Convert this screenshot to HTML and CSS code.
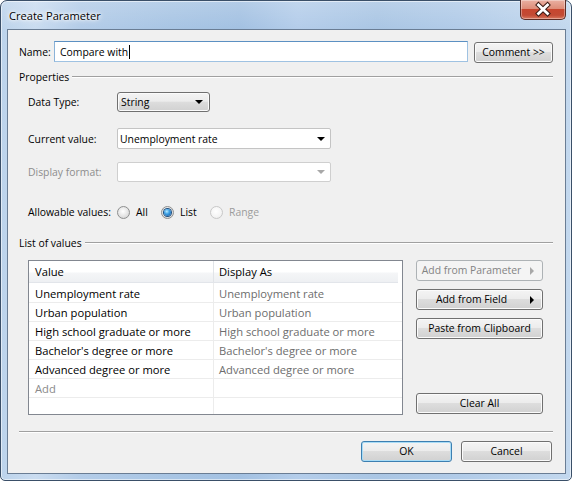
FILE: index.html
```html
<!DOCTYPE html>
<html>
<head>
<meta charset="utf-8">
<link rel="stylesheet" href="styles.css">
</head>
<body>
<div class="window">
  <div class="titlebar">
    <span class="title">Create Parameter</span>
    <div class="close">
      <svg width="44" height="19" viewBox="0 0 44 19">
        <path d="M17.5 5 L26.5 13.5 M26.5 5 L17.5 13.5" stroke="#3a1a14" stroke-width="4.8" stroke-linecap="square" fill="none"/>
        <path d="M17.5 5 L26.5 13.5 M26.5 5 L17.5 13.5" stroke="#ffffff" stroke-width="2.8" stroke-linecap="square" fill="none"/>
      </svg>
    </div>
  </div>
  <div class="client">
    <div class="name-row">
      <span class="name-label">Name:</span>
      <div class="textbox"><span>Compare with</span><span class="caret"></span></div>
      <button class="btn comment">Comment &gt;&gt;</button>
    </div>

    <div class="group-head props"><span class="gtitle">Properties</span><span class="rule"></span></div>

    <div class="field-row datatype">
      <span class="flabel">Data Type:</span>
      <div class="dropdown"><span>String</span><span class="arrow"></span></div>
    </div>

    <div class="field-row current">
      <span class="flabel">Current value:</span>
      <div class="combo"><span>Unemployment rate</span><span class="arrow"></span></div>
    </div>

    <div class="field-row display">
      <span class="flabel disabled">Display format:</span>
      <div class="combo combo-disabled"><span></span><span class="arrow"></span></div>
    </div>

    <div class="field-row allow">
      <span class="flabel">Allowable values:</span>
      <span class="ropt opt-all"><span class="radio"></span><span class="rlabel">All</span></span>
      <span class="ropt opt-list"><span class="radio checked"></span><span class="rlabel">List</span></span>
      <span class="ropt"><span class="radio rdisabled"></span><span class="rlabel disabled2">Range</span></span>
    </div>

    <div class="group-head list-head"><span class="gtitle">List of values</span><span class="rule"></span></div>

    <div class="list-area">
      <div class="table">
        <div class="thead">
          <div class="c1">Value</div>
          <div class="c2">Display As</div>
        </div>
        <div class="trow first"><div class="c1">Unemployment rate</div><div class="c2">Unemployment rate</div></div>
        <div class="trow"><div class="c1">Urban population</div><div class="c2">Urban population</div></div>
        <div class="trow"><div class="c1">High school graduate or more</div><div class="c2">High school graduate or more</div></div>
        <div class="trow"><div class="c1">Bachelor's degree or more</div><div class="c2">Bachelor's degree or more</div></div>
        <div class="trow"><div class="c1">Advanced degree or more</div><div class="c2">Advanced degree or more</div></div>
        <div class="trow"><div class="c1 add">Add</div><div class="c2"></div></div>
        <div class="trow"><div class="c1"></div><div class="c2"></div></div>
      </div>
      <div class="side">
        <button class="btn side-btn with-arrow btn-disabled">Add from Parameter<span class="tri"></span></button>
        <button class="btn side-btn with-arrow">Add from Field<span class="tri"></span></button>
        <button class="btn side-btn">Paste from Clipboard</button>
        <button class="btn side-btn clear">Clear All</button>
      </div>
    </div>

    <div class="sep"></div>

    <div class="footer">
      <button class="btn foot ok">OK</button>
      <button class="btn foot">Cancel</button>
    </div>
  </div>
</div>
</body>
</html>
```

FILE: styles.css
```css
html, body {
  margin: 0;
  padding: 0;
  background: #ffffff;
}

body {
  width: 572px;
  height: 481px;
  overflow: hidden;
  font-family: "Open Sans", "Noto Sans", "Liberation Sans", sans-serif;
  font-size: 10.4px;
  color: #000;
}

.window {
  box-sizing: border-box;
  width: 572px;
  height: 481px;
  border: 1px solid #3a4f68;
  border-radius: 7px 7px 5px 5px;
  background:
    linear-gradient(to bottom, rgba(255,255,255,0.18) 0px, rgba(255,255,255,0) 28px),
    linear-gradient(to right, #bcd3eb 0%, #cadcf0 6%, #b3cce8 14%, #a8c5e4 30%, #a3c1e2 42%, #b4cdea 52%, #aac6e4 66%, #b1cbe8 80%, #c3d8ee 100%);
  padding: 0 5px 6px 6px;
  display: flex;
  flex-direction: column;
  box-shadow: inset 0 0 0 1px rgba(255,255,255,0.55);
}

.titlebar {
  position: relative;
  height: 28px;
  flex: none;
}

.title {
  position: relative;
  left: 2px;
  line-height: 29px;
  font-size: 11.1px;
  color: #000;
  text-shadow: 0 0 6px #fff, 0 0 4px #fff, 0 0 2px #fff;
}

.close {
  position: absolute;
  right: 0px;
  top: -1px;
  width: 44px;
  height: 19px;
  border: 1px solid #5b2c25;
  border-top: none;
  border-radius: 0 0 5px 5px;
  background: linear-gradient(to bottom, #eab0a2 0%, #de8d79 45%, #c7462f 50%, #c24a34 80%, #d9785f 100%);
  box-shadow: inset 0 0 0 1px rgba(255,255,255,0.35);
}

.close svg {
  display: block;
}

.client {
  flex: 1;
  background: #f0f0f0;
  border: 1px solid #6a7d94;
  padding: 0 12px 0 11px;
  display: flex;
  flex-direction: column;
}

/* Name row */
.name-row {
  margin-top: 11px;
  height: 21px;
  display: flex;
  align-items: center;
}

.name-label {
  width: 35px;
  flex: none;
}

.textbox {
  box-sizing: border-box;
  width: 414px;
  height: 21px;
  background: #fff;
  border: 1px solid #9fc2e2;
  border-top-color: #5c90c2;
  border-left-color: #8ab2d8;
  display: flex;
  align-items: center;
  padding-left: 5px;
}

.caret {
  display: inline-block;
  width: 1px;
  height: 14px;
  background: #000;
  margin-left: 1px;
}

.btn {
  box-sizing: border-box;
  font-family: inherit;
  font-size: 10.4px;
  color: #000;
  height: 21px;
  padding: 0;
  border: 1px solid #707070;
  border-radius: 3px;
  background: linear-gradient(to bottom, #f4f4f4 0%, #ececec 46%, #dddddd 50%, #d1d1d1 100%);
  box-shadow: inset 0 0 0 1px #fbfbfb;
  line-height: 19px;
  text-align: center;
  position: relative;
}

.comment {
  width: 79px;
  margin-left: 6px;
  margin-top: 1px;
}

/* Group headers */
.group-head {
  height: 14px;
  display: flex;
  align-items: center;
}

.group-head .gtitle {
  flex: none;
  padding-right: 3px;
}

.group-head .rule {
  flex: 1;
  height: 0;
  border-top: 1px solid #a0a0a0;
  border-bottom: 1px solid #ffffff;
}

.props {
  margin-top: 8px;
}

.list-head {
  margin-top: 16px;
}

/* Field rows */
.field-row {
  display: flex;
  align-items: center;
  padding-left: 9px;
}

.flabel {
  width: 89px;
  flex: none;
}

.disabled {
  color: #8d8d8d;
}

.datatype {
  margin-top: 8px;
  height: 20px;
}

.current {
  margin-top: 16px;
  height: 21px;
}

.display {
  margin-top: 13px;
  height: 20px;
}

.allow {
  margin-top: 22px;
  height: 16px;
}

.dropdown {
  box-sizing: border-box;
  width: 93px;
  height: 20px;
  border: 1px solid #707070;
  border-radius: 3px;
  background: linear-gradient(to bottom, #f4f4f4 0%, #ececec 46%, #dddddd 50%, #d1d1d1 100%);
  box-shadow: inset 0 0 0 1px #fbfbfb;
  display: flex;
  align-items: center;
  justify-content: space-between;
  padding: 0 6px 0 3px;
}

.arrow {
  width: 0;
  height: 0;
  border-left: 4px solid transparent;
  border-right: 4px solid transparent;
  border-top: 4px solid #000;
}

.combo {
  box-sizing: border-box;
  width: 214px;
  height: 21px;
  background: #fff;
  border: 1px solid #c4c4c4;
  border-radius: 2px;
  display: flex;
  align-items: center;
  justify-content: space-between;
  padding: 0 5px 0 2px;
}

.combo-disabled {
  height: 20px;
  border-color: #cfcfcf;
}

.combo-disabled .arrow {
  border-top-color: #a8a8a8;
}

.ropt {
  display: flex;
  align-items: center;
  flex: none;
}

.opt-all {
  width: 44px;
}

.opt-list {
  width: 49px;
}

.radio {
  box-sizing: border-box;
  width: 13px;
  height: 13px;
  border-radius: 50%;
  border: 1px solid #8e8f8f;
  background: radial-gradient(circle at 45% 40%, #ffffff 0%, #e9e9e9 45%, #cdcdcd 100%);
  flex: none;
  display: flex;
  align-items: center;
  justify-content: center;
}

.radio.checked::after {
  content: "";
  width: 7px;
  height: 7px;
  border-radius: 50%;
  background: radial-gradient(circle at 40% 35%, #b9ecff 0%, #3fa2e6 40%, #0c4f9b 100%);
  box-shadow: 0 0 0 1px #1f4e7e;
}

.radio.rdisabled {
  border-color: #c8c8c8;
  background: radial-gradient(circle at 45% 40%, #ffffff 0%, #f4f4f4 60%, #e6e6e6 100%);
}

.rlabel {
  margin-left: 6px;
}

.disabled2 {
  color: #9c9c9c;
}

/* List area */
.list-area {
  margin-top: 10px;
  display: flex;
  align-items: flex-start;
  padding-left: 9px;
}

.table {
  box-sizing: border-box;
  width: 375px;
  height: 155px;
  border: 1px solid #828790;
  background: #fff;
  overflow: hidden;
  flex: none;
  font-size: 11.2px;
}

.thead {
  display: flex;
  height: 21px;
  border-bottom: 1px solid #e2e5ea;
  background: linear-gradient(to bottom, #ffffff 0%, #ffffff 50%, #f4f5f7 60%, #eef0f3 100%);
  margin-right: 4px;
}

.thead .c1, .thead .c2 {
  line-height: 21px;
  color: #000;
}

.thead .c1 {
  border-right: 1px solid #e1e4e8;
}

.c1 {
  box-sizing: border-box;
  width: 185px;
  padding-left: 6px;
  flex: none;
  white-space: nowrap;
  overflow: hidden;
}

.c2 {
  flex: 1;
  padding-left: 5px;
  white-space: nowrap;
  color: #6d6d6d;
}

.trow {
  display: flex;
  height: 18px;
  border-bottom: 1px solid #ececec;
}

.trow.first {
  height: 19px;
}

.trow .c1, .trow .c2 {
  line-height: 20px;
}

.trow.first .c1, .trow.first .c2 {
  line-height: 21px;
}

.trow .c1 {
  border-right: 1px solid #ececec;
}

.add {
  color: #8a8a8a;
}

.side {
  margin-left: 13px;
  width: 127px;
  display: flex;
  flex-direction: column;
}

.side-btn {
  width: 127px;
  margin-bottom: 8px;
}

.with-arrow {
  padding-right: 16px;
}

.tri {
  position: absolute;
  right: 8px;
  top: 6px;
  width: 0;
  height: 0;
  border-top: 4px solid transparent;
  border-bottom: 4px solid transparent;
  border-left: 4px solid #000;
}

.btn-disabled {
  border-color: #adb2b5;
  background: #f4f4f4;
  box-shadow: none;
  color: #838383;
}

.btn-disabled .tri {
  border-left-color: #a8a8a8;
}

.clear {
  margin-top: 46px;
  margin-bottom: 0;
}

.sep {
  margin-top: 16px;
  height: 0;
  border-top: 1px solid #a0a0a0;
  border-bottom: 1px solid #ffffff;
}

.footer {
  margin-top: 8px;
  display: flex;
  justify-content: flex-end;
  padding-right: 1px;
}

.foot {
  width: 91px;
  margin-left: 9px;
}

.ok {
  border-color: #3c7fb1;
  box-shadow: inset 0 0 0 1px #a9dcf6;
}
```
